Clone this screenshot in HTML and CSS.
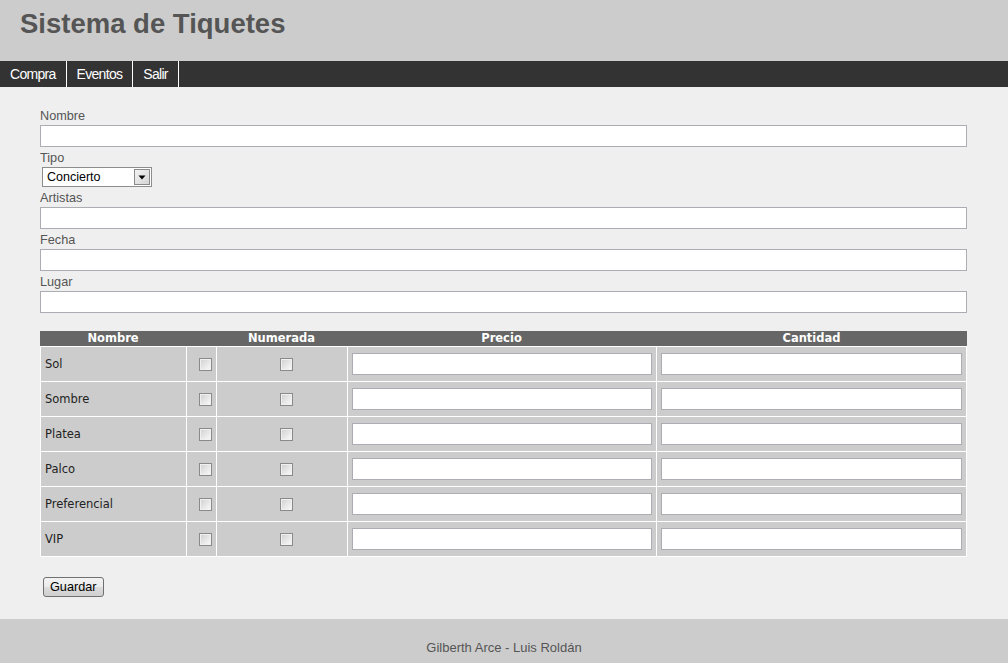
FILE: index.html
```html
<!DOCTYPE html>
<html lang="es">
<head>
<meta charset="utf-8">
<title>Sistema de Tiquetes</title>
<link rel="stylesheet" href="styles.css">
</head>
<body>
<header class="site-header">
  <h1 class="site-title">Sistema de Tiquetes</h1>
</header>
<nav class="main-nav">
  <a class="nav-link" href="#">Compra</a>
  <a class="nav-link" href="#">Eventos</a>
  <a class="nav-link" href="#">Salir</a>
</nav>
<main class="content">
  <form class="event-form">
    <label class="field-label" for="nombre">Nombre</label>
    <input class="text-input" id="nombre" type="text">
    <label class="field-label" for="tipo">Tipo</label>
    <span class="select-wrap">
      <select class="select-input" id="tipo"><option>Concierto</option></select>
      <span class="select-arrow"><svg width="16" height="16" viewBox="0 0 16 16"><defs><linearGradient id="ag" x1="0" y1="0" x2="1" y2="1"><stop offset="0" stop-color="#f4f4f4"/><stop offset="1" stop-color="#d4d4d4"/></linearGradient></defs><rect x="0.5" y="0.5" width="15" height="15" fill="url(#ag)" stroke="#8a8a8a"/><path d="M4.5 6.5h7l-3.5 4z" fill="#000"/></svg></span>
    </span>
    <label class="field-label" for="artistas">Artistas</label>
    <input class="text-input" id="artistas" type="text">
    <label class="field-label" for="fecha">Fecha</label>
    <input class="text-input" id="fecha" type="text">
    <label class="field-label" for="lugar">Lugar</label>
    <input class="text-input" id="lugar" type="text">

    <table class="zones">
      <colgroup>
        <col class="col-name">
        <col class="col-check">
        <col class="col-num">
        <col class="col-price">
        <col class="col-qty">
      </colgroup>
      <thead>
        <tr><th>Nombre</th><th></th><th>Numerada</th><th>Precio</th><th>Cantidad</th></tr>
      </thead>
      <tbody>
        <tr><td>Sol</td><td class="check-cell"><input class="check" type="checkbox"></td><td class="check-cell"><input class="check" type="checkbox"></td><td><input class="cell-input" type="text"></td><td><input class="cell-input" type="text"></td></tr>
        <tr><td>Sombre</td><td class="check-cell"><input class="check" type="checkbox"></td><td class="check-cell"><input class="check" type="checkbox"></td><td><input class="cell-input" type="text"></td><td><input class="cell-input" type="text"></td></tr>
        <tr><td>Platea</td><td class="check-cell"><input class="check" type="checkbox"></td><td class="check-cell"><input class="check" type="checkbox"></td><td><input class="cell-input" type="text"></td><td><input class="cell-input" type="text"></td></tr>
        <tr><td>Palco</td><td class="check-cell"><input class="check" type="checkbox"></td><td class="check-cell"><input class="check" type="checkbox"></td><td><input class="cell-input" type="text"></td><td><input class="cell-input" type="text"></td></tr>
        <tr><td>Preferencial</td><td class="check-cell"><input class="check" type="checkbox"></td><td class="check-cell"><input class="check" type="checkbox"></td><td><input class="cell-input" type="text"></td><td><input class="cell-input" type="text"></td></tr>
        <tr><td>VIP</td><td class="check-cell"><input class="check" type="checkbox"></td><td class="check-cell"><input class="check" type="checkbox"></td><td><input class="cell-input" type="text"></td><td><input class="cell-input" type="text"></td></tr>
      </tbody>
    </table>

    <button class="save-btn" type="button">Guardar</button>
  </form>
</main>
<footer class="site-footer">Gilberth Arce - Luis Roldán</footer>
</body>
</html>
```
FILE: styles.css
```css
html, body {
  margin: 0;
  padding: 0;
}

body {
  font-family: "Liberation Sans", Arial, sans-serif;
  background: #efefef;
}

.site-header {
  background: #cccccc;
  height: 61px;
  box-sizing: border-box;
  padding: 8px 0 0 20px;
}

.site-title {
  margin: 0;
  font-family: "Liberation Sans", Arial, sans-serif;
  font-weight: bold;
  font-size: 27.5px;
  line-height: 32px;
  color: #555555;
}

.main-nav {
  display: flex;
  background: #333333;
  height: 26px;
}

.nav-link {
  display: block;
  box-sizing: border-box;
  color: #ffffff;
  text-decoration: none;
  padding: 0 10px;
  line-height: 26px;
  border-right: 1px solid #ffffff;
  font-family: "Liberation Sans", Arial, sans-serif;
  font-size: 14px;
  letter-spacing: -0.7px;
}

.nav-compra { width: 66px; }

.content {
  padding: 22px 41px 22px 40px;
}

.event-form {
  display: block;
}

.field-label {
  display: block;
  font-size: 12.7px;
  line-height: 15px;
  padding-bottom: 1px;
  color: #555555;
}

.text-input {
  display: block;
  box-sizing: border-box;
  width: 100%;
  height: 22px;
  margin: 0 0 4px 0;
  padding: 0 3px;
  border: 1px solid #abadb3;
  background: #ffffff;
  font-family: "Liberation Sans", Arial, sans-serif;
  font-size: 12.7px;
}

.select-wrap {
  display: block;
  position: relative;
  width: 110px;
  height: 20px;
  margin: 0 0 4px 2px;
}

.select-input {
  display: block;
  -webkit-appearance: none;
  appearance: none;
  box-sizing: border-box;
  width: 110px;
  height: 20px;
  margin: 0;
  padding: 0 0 0 4px;
  border: 1px solid #8d8d8d;
  border-radius: 0;
  background: #ffffff;
  color: #000000;
  font-family: "Liberation Sans", Arial, sans-serif;
  font-size: 12.5px;
}

.select-arrow {
  position: absolute;
  top: 2px;
  right: 2px;
  width: 16px;
  height: 16px;
  pointer-events: none;
}

.select-arrow svg {
  display: block;
}

.zones {
  width: 927px;
  margin-top: 18px;
  border-collapse: separate;
  border-spacing: 0;
  table-layout: fixed;
  font-family: "DejaVu Sans", Verdana, sans-serif;
  font-size: 11.5px;
}

.col-name { width: 146px; }
.col-check { width: 30px; }
.col-num { width: 131px; }
.col-price { width: 309px; }
.col-qty { width: 311px; }

.zones th {
  background: #666666;
  color: #ffffff;
  font-weight: bold;
  height: 15px;
  line-height: 15px;
  padding: 0;
  border: none;
  text-align: center;
}

.zones td {
  background: #cccccc;
  color: #222222;
  border-left: 1px solid #ffffff;
  border-bottom: 1px solid #ffffff;
  padding: 6px 4px;
  vertical-align: middle;
  text-align: left;
}

.zones td:last-child {
  border-right: 1px solid #ffffff;
}

.zones tbody tr:first-child td {
  border-top: 1px solid #ffffff;
}

.zones td.check-cell {
  text-align: center;
  padding-left: 12px;
  padding-right: 4px;
  line-height: 13px;
}

.check {
  -webkit-appearance: none;
  appearance: none;
  display: inline-block;
  vertical-align: middle;
  box-sizing: border-box;
  width: 13px;
  height: 13px;
  margin: 0;
  border: 1px solid #8a8a8a;
  border-radius: 0;
  background: linear-gradient(135deg, #cfcfcf 0%, #e8e8e8 55%, #fbfbfb 100%);
  box-shadow: inset 0 0 0 1px #f0f0f0;
}

.cell-input {
  display: block;
  box-sizing: border-box;
  width: 100%;
  height: 22px;
  margin: 0;
  padding: 0 3px;
  border: 1px solid #abadb3;
  background: #ffffff;
}

.save-btn {
  display: block;
  margin: 20px 0 0 3px;
  box-sizing: border-box;
  height: 20px;
  padding: 0 6px;
  border: 1px solid #707070;
  border-radius: 3px;
  background: linear-gradient(#f2f2f2 0%, #ebebeb 50%, #dddddd 51%, #cfcfcf 100%);
  color: #000000;
  font-family: "Liberation Sans", Arial, sans-serif;
  font-size: 12.7px;
  line-height: 18px;
}

.site-footer {
  background: #cccccc;
  text-align: center;
  padding: 20px 0 7px;
  line-height: 18px;
  font-size: 13px;
  color: #555555;
}
```
